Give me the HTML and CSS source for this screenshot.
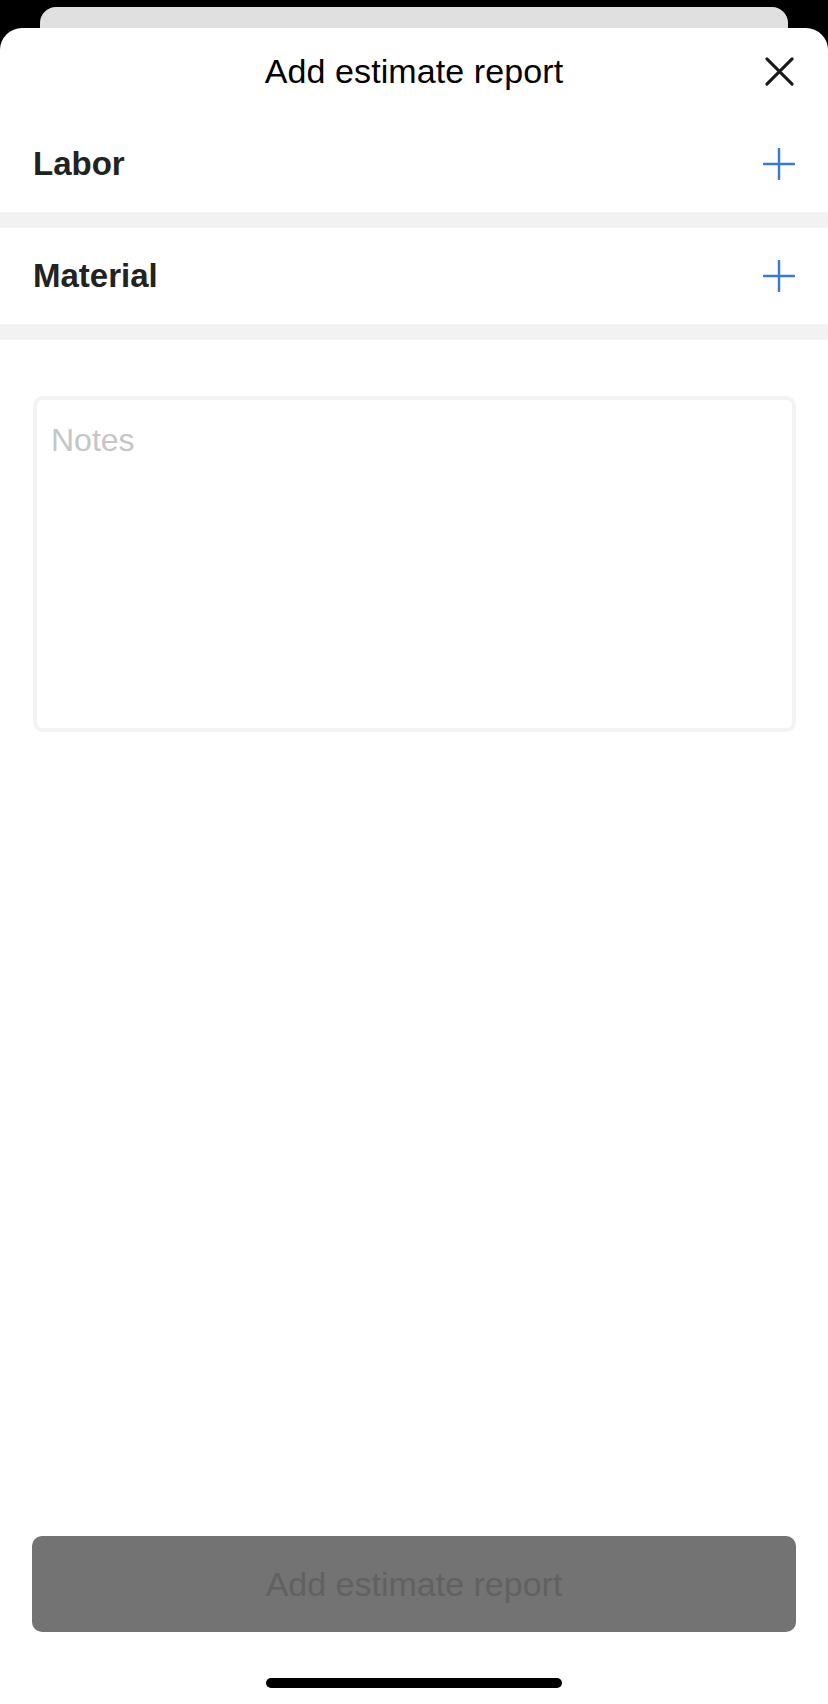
FILE: index.html
```html
<!DOCTYPE html>
<html lang="en">
<head>
<meta charset="utf-8">
<title>Add estimate report</title>
<link rel="stylesheet" href="styles.css">
</head>
<body>
<div class="screen">
  <div class="peek"></div>
  <div class="sheet">
    <header class="header">
      <h1 class="title">Add estimate report</h1>
      <button class="close" aria-label="Close">
        <svg viewBox="0 0 32 32" width="32" height="32"><path d="M3 3L29 29M29 3L3 29" stroke="#1a1a1a" stroke-width="3.2" stroke-linecap="round" fill="none"/></svg>
      </button>
    </header>
    <div class="row">
      <span class="row-label">Labor</span>
      <svg class="plus" viewBox="0 0 32 32" width="32" height="32"><path d="M16 1V31M1 16H31" stroke="#3478d8" stroke-width="2.4" stroke-linecap="round" fill="none"/></svg>
    </div>
    <div class="sep"></div>
    <div class="row">
      <span class="row-label">Material</span>
      <svg class="plus" viewBox="0 0 32 32" width="32" height="32"><path d="M16 1V31M1 16H31" stroke="#3478d8" stroke-width="2.4" stroke-linecap="round" fill="none"/></svg>
    </div>
    <div class="sep"></div>
    <div class="notes"><span class="placeholder">Notes</span></div>
    <button class="submit">Add estimate report</button>
    <div class="home-area"><div class="home-indicator"></div></div>
  </div>
</div>
</body>
</html>
```

FILE: styles.css
```css
* { box-sizing: border-box; }
html, body { margin: 0; padding: 0; }
body {
  background: #000;
  font-family: "Liberation Sans", Arial, sans-serif;
  width: 828px;
  height: 1704px;
  overflow: hidden;
}
.screen {
  display: flex;
  flex-direction: column;
  height: 1704px;
  padding-top: 7px;
}
.peek {
  height: 21px;
  margin: 0 40px;
  background: #e0e0e0;
  border-radius: 16px 16px 0 0;
  flex: none;
}
.sheet {
  flex: 1;
  background: #fff;
  border-radius: 22px 22px 0 0;
  display: flex;
  flex-direction: column;
}
.header {
  height: 87px;
  flex: none;
  display: flex;
  align-items: center;
  justify-content: center;
  position: relative;
  padding: 0 33px;
}
.title {
  margin: 0;
  font-size: 34px;
  font-weight: 400;
  color: #000;
  letter-spacing: 0.1px;
}
.close {
  position: absolute;
  right: 33px;
  top: 28px;
  width: 31px;
  height: 31px;
  padding: 0;
  border: 0;
  background: none;
  display: flex;
}
.close svg { width: 31px; height: 31px; }
.row {
  height: 97px;
  flex: none;
  display: flex;
  align-items: center;
  justify-content: space-between;
  padding: 0 33px;
}
.row + .sep + .row { height: 96px; }
.row-label {
  font-size: 33px;
  font-weight: 700;
  color: #222;
}
.plus { flex: none; }
.sep {
  height: 16px;
  flex: none;
  background: #f2f2f2;
}
.notes {
  flex: none;
  margin: 56px 32px 0 33px;
  height: 336px;
  border: 4px solid #f3f3f3;
  border-radius: 10px;
  padding: 22px 14px;
}
.placeholder {
  font-size: 32px;
  color: #c6c6c6;
  line-height: 37px;
}
.submit {
  margin: auto 32px 0 32px;
  height: 96px;
  flex: none;
  border: 0;
  border-radius: 10px;
  background: #737373;
  color: #616161;
  font-family: "Liberation Sans", Arial, sans-serif;
  font-size: 34px;
  padding: 0;
}
.home-area {
  height: 72px;
  flex: none;
  display: flex;
  justify-content: center;
  padding-top: 46px;
}
.home-indicator {
  width: 296px;
  height: 10px;
  border-radius: 5px;
  background: #000;
}
```
